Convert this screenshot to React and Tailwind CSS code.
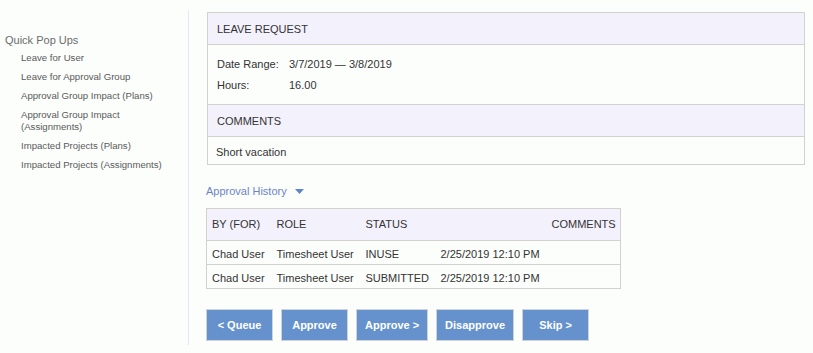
const popups = [
    'Leave for User',
    'Leave for Approval Group',
    'Approval Group Impact (Plans)',
    'Approval Group Impact (Assignments)',
    'Impacted Projects (Plans)',
    'Impacted Projects (Assignments)',
];

const history = [
    { by: 'Chad User', role: 'Timesheet User', status: 'INUSE', date: '2/25/2019 12:10 PM' },
    { by: 'Chad User', role: 'Timesheet User', status: 'SUBMITTED', date: '2/25/2019 12:10 PM' },
];

const buttons = ['< Queue', 'Approve', 'Approve >', 'Disapprove', 'Skip >'];

export default function App() {
    return (
        <div className="min-h-[353px] bg-[#fcfefc] pt-[10px] text-[#333] font-['Liberation_Sans',Arial,sans-serif]">
            <div className="flex">
                <div className="w-[189px] shrink-0 border-r border-[#e6e6f4] pt-[23px]">
                    <h3 className="pl-[5px] text-[11px] leading-[14px] text-[#6b6b6b]">Quick Pop Ups</h3>
                    <ul className="mt-[5px] flex w-[165px] flex-col gap-[7px] pl-[21px]">
                        {popups.map((p) => (
                            <li key={p} className="text-[9.6px] leading-[12px] text-[#5a5a5a]">{p}</li>
                        ))}
                    </ul>
                </div>

                <div className="pl-[17px] pt-[2px] pb-[4px]">
                    <div className="ml-[1px] w-[598px] border border-[#d3d1cc] text-[11px]">
                        <div className="h-[32px] border-b border-[#d3d1cc] bg-[#f3f1fc] pl-[9px] pt-[1px] leading-[31px]">LEAVE REQUEST</div>
                        <div className="grid grid-cols-[72px_1fr] pl-[9px] pt-[9px] pb-[8px] leading-[21px]">
                            <span>Date Range:</span>
                            <span>3/7/2019 — 3/8/2019</span>
                            <span>Hours:</span>
                            <span>16.00</span>
                        </div>
                        <div className="h-[33px] border-y border-[#d3d1cc] bg-[#f3f1fc] pl-[9px] pt-[1px] leading-[30px]">COMMENTS</div>
                        <div className="h-[27px] pl-[8px] pt-[3px] leading-[24px]">Short vacation</div>
                    </div>

                    <button className="mt-[19px] flex items-center gap-[8px] text-[11px] leading-[14px] text-[#6d84c7]">
                        Approval History
                        <svg width="9" height="5" viewBox="0 0 9 5" className="mt-[1px]">
                            <path d="M0 0 H9 L4.5 5 Z" fill="#5d85c8" />
                        </svg>
                    </button>

                    <table className="mt-[10px] table-fixed border-collapse border border-[#d3d1cc] text-left text-[11px]">
                        <colgroup>
                            <col className="w-[64px]" />
                            <col className="w-[89px]" />
                            <col className="w-[75px]" />
                            <col className="w-[111px]" />
                            <col className="w-[75px]" />
                        </colgroup>
                        <thead>
                            <tr className="h-[32px] border-b border-[#d3d1cc] bg-[#f3f1fc]">
                                <th className="pl-[5px] font-normal">BY (FOR)</th>
                                <th className="pl-[6px] font-normal">ROLE</th>
                                <th className="pl-[6px] font-normal">STATUS</th>
                                <th className="pl-[6px] font-normal"></th>
                                <th className="pl-[6px] font-normal">COMMENTS</th>
                            </tr>
                        </thead>
                        <tbody>
                            {history.map((h, i) => (
                                <tr key={i} className="h-[24px] border-b border-[#d3d1cc]">
                                    <td className="whitespace-nowrap pl-[5px] pt-[3px]">{h.by}</td>
                                    <td className="whitespace-nowrap pl-[6px] pt-[3px]">{h.role}</td>
                                    <td className="whitespace-nowrap pl-[6px] pt-[3px]">{h.status}</td>
                                    <td className="whitespace-nowrap pl-[6px] pt-[3px]">{h.date}</td>
                                    <td className="pl-[6px]"></td>
                                </tr>
                            ))}
                        </tbody>
                    </table>

                    <div className="mt-[20px] flex gap-[8px]">
                        {buttons.map((b) => (
                            <button
                                key={b}
                                className="h-[32px] min-w-[67px] border border-[#cfd3d8] bg-[#6592cd] px-[8px] pt-[1px] text-[11px] font-bold text-white"
                            >
                                {b}
                            </button>
                        ))}
                    </div>
                </div>
            </div>
        </div>
    );
}
